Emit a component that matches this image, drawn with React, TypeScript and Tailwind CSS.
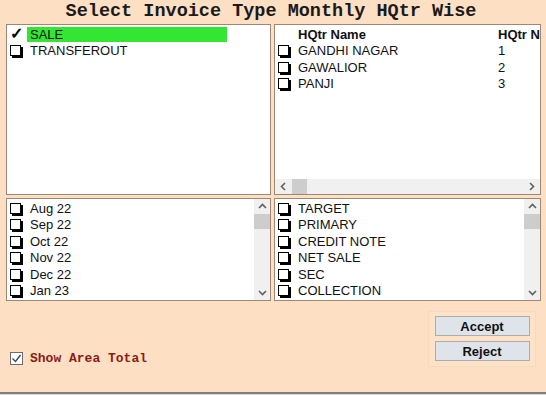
import React from 'react';

const Box = () => (
  <span className="inline-block w-[11px] h-[11px] shrink-0 bg-white border border-black shadow-[2px_2px_0_#000]" />
);

const Chevron = ({ dir }: { dir: 'up' | 'down' | 'left' | 'right' }) => {
  const pts: Record<string, string> = {
    up: '1,6 4.5,2.5 8,6',
    down: '1,3 4.5,6.5 8,3',
    left: '6,1 2.5,4.5 6,8',
    right: '3,1 6.5,4.5 3,8',
  };
  return (
    <svg width="9" height="9" viewBox="0 0 9 9">
      <polyline points={pts[dir]} fill="none" stroke="#606060" strokeWidth="1.6" />
    </svg>
  );
};

const VScroll = () => (
  <div className="w-[16px] shrink-0 flex flex-col bg-[#f0f0f0]">
    <div className="h-[15px] flex items-center justify-center"><Chevron dir="up" /></div>
    <div className="h-[15px] bg-[#cdcdcd]" />
    <div className="flex-1" />
    <div className="h-[15px] flex items-center justify-center"><Chevron dir="down" /></div>
  </div>
);

const CheckList = ({ items }: { items: string[] }) => (
  <div className="flex-1 flex border border-[#9c8875] bg-white overflow-hidden">
    <div className="flex-1 pt-[1px]">
      {items.map(it => (
        <div key={it} className="h-[16.5px] flex items-center pl-[3px] gap-[9px]">
          <Box />
          <span className="text-[13px] leading-none text-[#111]">{it}</span>
        </div>
      ))}
    </div>
    <VScroll />
  </div>
);

const hqtrs = [
  { name: 'GANDHI NAGAR', no: '1' },
  { name: 'GAWALIOR', no: '2' },
  { name: 'PANJI', no: '3' },
];

export default function App() {
  return (
    <div
      className="w-[546px] h-[395px] bg-[#fddfc4] flex flex-col overflow-hidden"
      style={{ fontFamily: '"Liberation Sans", Arial, sans-serif' }}
    >
      <div
        className="h-[24px] flex items-center justify-center text-[18.5px] font-bold text-[#1a1a1a] pr-[4px]"
        style={{ fontFamily: '"Liberation Mono", "Courier New", monospace' }}
      >
        Select Invoice Type Monthly HQtr Wise
      </div>

      <div className="h-[277px] grid grid-cols-[265px_267px] grid-rows-[171px_103px] gap-[3px] pl-[6px]">
        {/* invoice type */}
        <div className="border border-[#9c8875] bg-white pt-[1px]">
          <div className="h-[16.5px] flex items-center pl-[3px]">
            <span className="w-[17px] text-[16px] font-bold leading-none text-black">✓</span>
            <span className="w-[200px] h-[15px] bg-[#33e633] flex items-center pl-[3px] text-[13px] leading-none text-[#111]">SALE</span>
          </div>
          <div className="h-[16.5px] flex items-center pl-[3px] gap-[9px]">
            <Box />
            <span className="text-[13px] leading-none text-[#111]">TRANSFEROUT</span>
          </div>
        </div>

        {/* hqtr grid, last column cut off by the panel edge as in the original */}
        <div className="border border-[#9c8875] bg-white flex flex-col overflow-hidden">
          <div className="flex-1 pt-[1px]">
            <div className="h-[16.5px] flex items-center text-[13px] font-bold leading-none text-[#111]">
              <span className="pl-[23px] w-[223px] shrink-0">HQtr Name</span>
              <span className="whitespace-nowrap shrink-0">HQtr No</span>
            </div>
            {hqtrs.map(h => (
              <div key={h.name} className="h-[16.5px] flex items-center text-[13px] leading-none text-[#111]">
                <span className="flex items-center gap-[9px] pl-[3px] w-[223px] shrink-0">
                  <Box />
                  {h.name}
                </span>
                <span>{h.no}</span>
              </div>
            ))}
          </div>
          <div className="h-[15px] flex bg-[#f0f0f0]">
            <div className="w-[17px] flex items-center justify-center"><Chevron dir="left" /></div>
            <div className="w-[15px] bg-[#cdcdcd]" />
            <div className="flex-1" />
            <div className="w-[17px] flex items-center justify-center"><Chevron dir="right" /></div>
          </div>
        </div>

        {/* months */}
        <CheckList items={['Aug 22', 'Sep 22', 'Oct 22', 'Nov 22', 'Dec 22', 'Jan 23']} />

        {/* heads */}
        <CheckList items={['TARGET', 'PRIMARY', 'CREDIT NOTE', 'NET SALE', 'SEC', 'COLLECTION']} />
      </div>

      <div className="flex-1 flex items-start">
        <div className="flex items-center gap-[7px] pl-[10px] mt-[48px]">
          <span className="w-[13px] h-[13px] border border-[#6d6d6d] bg-white flex items-center justify-center">
            <svg width="11" height="11" viewBox="0 0 11 11">
              <polyline points="1.5,5.5 4.5,8.5 9.5,2" fill="none" stroke="#3a4a5a" strokeWidth="1.4" />
            </svg>
          </span>
          <span
            className="text-[13px] font-bold text-[#8b1c14]"
            style={{ fontFamily: '"Liberation Mono", "Courier New", monospace' }}
          >
            Show Area Total
          </span>
        </div>
        <div className="ml-auto mr-[10px] mt-[10px] w-[108px] h-[56px] border border-[#f8d9bc] bg-[#fee2c8] flex flex-col items-center gap-[5px] pt-[4px]">
          <button className="w-[95px] h-[20px] bg-[#dfe4ea] border border-[#adadad] text-[13px] font-bold text-[#111]">Accept</button>
          <button className="w-[95px] h-[20px] bg-[#dfe4ea] border border-[#adadad] text-[13px] font-bold text-[#111]">Reject</button>
        </div>
      </div>

      <div className="h-[3px] bg-[#7e7e7e] border-b border-[#d8d8d8]" />
    </div>
  );
}
